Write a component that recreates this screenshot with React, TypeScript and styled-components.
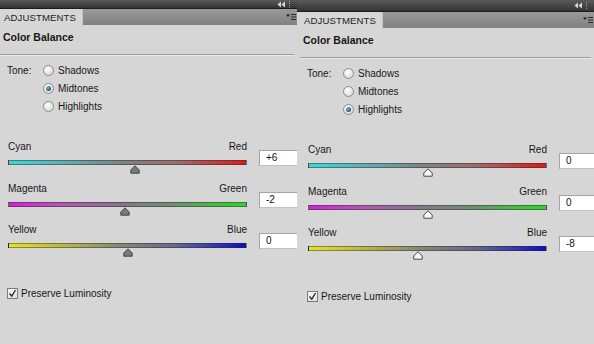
import React from "react";
import styled, { createGlobalStyle } from "styled-components";

type Tone = "Shadows" | "Midtones" | "Highlights";

interface SliderData {
  left: string;
  right: string;
  value: number;
  gradient: string;
}

interface PanelData {
  tone: Tone;
  values: number[];
  hollow: boolean;
  inset: number;
  barHeight: number;
}

const gradients = [
  "linear-gradient(to right, #3cd6da 0%, #5fb0b3 22%, #7e8283 48%, #9b6e6e 70%, #c23c3c 88%, #dc1a1a 100%)",
  "linear-gradient(to right, #d620d6 0%, #b158b1 22%, #83778a 48%, #6d916d 70%, #45bd45 88%, #2ad62a 100%)",
  "linear-gradient(to right, #e4e422 0%, #b8b848 22%, #85857a 48%, #67678e 70%, #3434ae 88%, #0c0cc4 100%)",
];

const pairs = [
  ["Cyan", "Red"],
  ["Magenta", "Green"],
  ["Yellow", "Blue"],
];

const panels: PanelData[] = [
  { tone: "Midtones", values: [6, -2, 0], hollow: false, inset: 0, barHeight: 8 },
  { tone: "Highlights", values: [0, 0, -8], hollow: true, inset: 3, barHeight: 11 },
];

const tones: Tone[] = ["Shadows", "Midtones", "Highlights"];

const fmt = (v: number) => (v > 0 ? `+${v}` : `${v}`);

const GlobalStyle = createGlobalStyle`
  html, body {
    margin: 0;
    padding: 0;
    background: #d6d6d6;
  }
  body {
    font-family: "Liberation Sans", Arial, sans-serif;
    font-size: 10px;
    color: #161616;
    overflow: hidden;
  }
`;

const Page = styled.div`
  display: flex;
  width: 594px;
  height: 344px;
  background: #d6d6d6;
`;

const Panel = styled.div`
  width: 297px;
  height: 344px;
  display: flex;
  flex-direction: column;
  overflow: hidden;
  flex-shrink: 0;
`;

const TopBar = styled.div<{ $h: number }>`
  height: ${(p) => p.$h}px;
  background: linear-gradient(#5a5a5a, #333333);
  border-bottom: 1px solid #1c1c1c;
  display: flex;
  justify-content: flex-end;
  align-items: center;
  padding-right: 4px;
`;

const TabRow = styled.div`
  height: 16px;
  display: flex;
  align-items: stretch;
  background: linear-gradient(#9a9a9a, #808080);
`;

const Tab = styled.div<{ $inset: number }>`
  width: ${(p) => 83 + p.$inset}px;
  box-sizing: border-box;
  padding-left: ${(p) => 4 + p.$inset}px;
  background: #d6d6d6;
  border-right: 1px solid #c4c4c4;
  display: flex;
  align-items: center;
  font-size: 9.6px;
  color: #222222;
  letter-spacing: 0.1px;
`;

const TabFill = styled.div`
  flex: 1;
  display: flex;
  justify-content: flex-end;
  align-items: center;
  padding-right: 1px;
`;

const Body = styled.div<{ $inset: number }>`
  padding-left: ${(p) => p.$inset}px;
  display: flex;
  flex-direction: column;
`;

const Title = styled.div`
  font-weight: bold;
  font-size: 10.5px;
  line-height: 13px;
  padding: 6px 0 0 3px;
`;

const Divider = styled.div`
  margin-top: 10px;
  height: 1px;
  background: #9c9c9c;
  border-bottom: 1px solid #ececec;
  margin-right: 3px;
`;

const ToneGroup = styled.div`
  margin-top: 5px;
  display: grid;
  grid-template-columns: 36px auto;
  padding-left: 7px;
`;

const ToneLabel = styled.div`
  line-height: 18px;
  padding-top: 1px;
`;

const Options = styled.div`
  display: flex;
  flex-direction: column;
`;

const Option = styled.label`
  height: 18px;
  display: flex;
  align-items: center;
  gap: 4px;
`;

const Radio = styled.span<{ $on: boolean }>`
  width: 11px;
  height: 11px;
  box-sizing: border-box;
  border-radius: 50%;
  border: 1px solid #8c8c8c;
  background: radial-gradient(circle at 40% 35%, #ffffff, #dedede 70%, #c8c8c8);
  display: flex;
  align-items: center;
  justify-content: center;
  &::after {
    content: "";
    display: ${(p) => (p.$on ? "block" : "none")};
    width: 5px;
    height: 5px;
    border-radius: 50%;
    background: radial-gradient(circle at 35% 35%, #7fb6c4, #24586a 70%, #173f4c);
  }
`;

const Sliders = styled.div`
  margin-top: 26px;
  display: flex;
  flex-direction: column;
  gap: 6px;
  padding-left: 8px;
`;

const SliderRow = styled.div`
  display: grid;
  grid-template-columns: 239px 40px;
  column-gap: 12px;
  height: 35.5px;
`;

const SliderCol = styled.div`
  display: flex;
  flex-direction: column;
`;

const Ends = styled.div`
  display: flex;
  justify-content: space-between;
  line-height: 12px;
  margin-bottom: 7px;
`;

const Track = styled.div<{ $bg: string }>`
  position: relative;
  height: 5px;
  box-sizing: border-box;
  border: 1px solid rgba(40, 40, 40, 0.45);
  background: ${(p) => p.$bg};
`;

const Thumb = styled.svg`
  position: absolute;
  top: 4px;
  margin-left: -5px;
`;

const ValueBox = styled.div`
  margin-top: 9px;
  height: 16px;
  box-sizing: border-box;
  background: #ffffff;
  border: 1px solid #c2c2c2;
  border-top-color: #a4a4a4;
  border-left-color: #a4a4a4;
  padding-left: 6px;
  line-height: 14px;
  color: #111;
`;

const Preserve = styled.label`
  margin-top: 28px;
  padding-left: 7px;
  display: flex;
  align-items: center;
  gap: 3px;
`;

const Check = styled.span`
  width: 11px;
  height: 11px;
  box-sizing: border-box;
  border: 1px solid #7c7c7c;
  background: linear-gradient(#f6f6f6, #e2e2e2);
  display: flex;
  align-items: center;
  justify-content: center;
`;

const CollapseIcon = () => (
  <svg width="16" height="7" viewBox="0 0 16 7">
    <path d="M4 0.5 L0.5 3.5 L4 6.5 Z" fill="#d8d8d8" />
    <path d="M8 0.5 L4.5 3.5 L8 6.5 Z" fill="#d8d8d8" />
    <path d="M12.5 0 V7" stroke="#9a9a9a" strokeDasharray="1 1" />
  </svg>
);

const MenuIcon = () => (
  <svg width="10" height="8" viewBox="0 0 10 8">
    <path d="M0 1.5 H4 L2 4 Z" fill="#1e1e1e" />
    <path d="M5 1.5 H10 M5 4 H10 M5 6.5 H10" stroke="#2a2a2a" strokeWidth="1" />
  </svg>
);

const ThumbShape: React.FC<{ hollow: boolean; pct: number }> = ({ hollow, pct }) => (
  <Thumb width="10" height="9" viewBox="0 0 10 9" style={{ left: `${pct}%` }}>
    <path
      d="M5 0.8 L9.2 5 L9.2 8.2 L0.8 8.2 L0.8 5 Z"
      fill={hollow ? "#f8f8f8" : "#7a7a7a"}
      stroke="#3a3a3a"
      strokeWidth="0.9"
      strokeLinejoin="round"
    />
  </Thumb>
);

const Slider: React.FC<{ data: SliderData; hollow: boolean }> = ({ data, hollow }) => (
  <SliderRow>
    <SliderCol>
      <Ends>
        <span>{data.left}</span>
        <span>{data.right}</span>
      </Ends>
      <Track $bg={data.gradient}>
        <ThumbShape hollow={hollow} pct={(data.value + 100) / 2} />
      </Track>
    </SliderCol>
    <ValueBox>{fmt(data.value)}</ValueBox>
  </SliderRow>
);

const AdjustmentsPanel: React.FC<{ data: PanelData }> = ({ data }) => (
  <Panel>
    <TopBar $h={data.barHeight}>
      <CollapseIcon />
    </TopBar>
    <TabRow>
      <Tab $inset={data.inset}>ADJUSTMENTS</Tab>
      <TabFill>
        <MenuIcon />
      </TabFill>
    </TabRow>
    <Body $inset={data.inset}>
      <Title>Color Balance</Title>
      <Divider />
      <ToneGroup>
        <ToneLabel>Tone:</ToneLabel>
        <Options>
          {tones.map((t) => (
            <Option key={t}>
              <Radio $on={t === data.tone} />
              {t}
            </Option>
          ))}
        </Options>
      </ToneGroup>
      <Sliders>
        {pairs.map(([l, r], i) => (
          <Slider
            key={l}
            hollow={data.hollow}
            data={{ left: l, right: r, value: data.values[i], gradient: gradients[i] }}
          />
        ))}
      </Sliders>
      <Preserve>
        <Check>
          <svg width="9" height="9" viewBox="0 0 9 9">
            <path d="M1.5 4.5 L3.8 7.2 L7.5 1" stroke="#1a2440" strokeWidth="1.3" fill="none" />
          </svg>
        </Check>
        Preserve Luminosity
      </Preserve>
    </Body>
  </Panel>
);

export default function App() {
  return (
    <>
      <GlobalStyle />
      <Page>
        {panels.map((p, i) => (
          <AdjustmentsPanel key={i} data={p} />
        ))}
      </Page>
    </>
  );
}
